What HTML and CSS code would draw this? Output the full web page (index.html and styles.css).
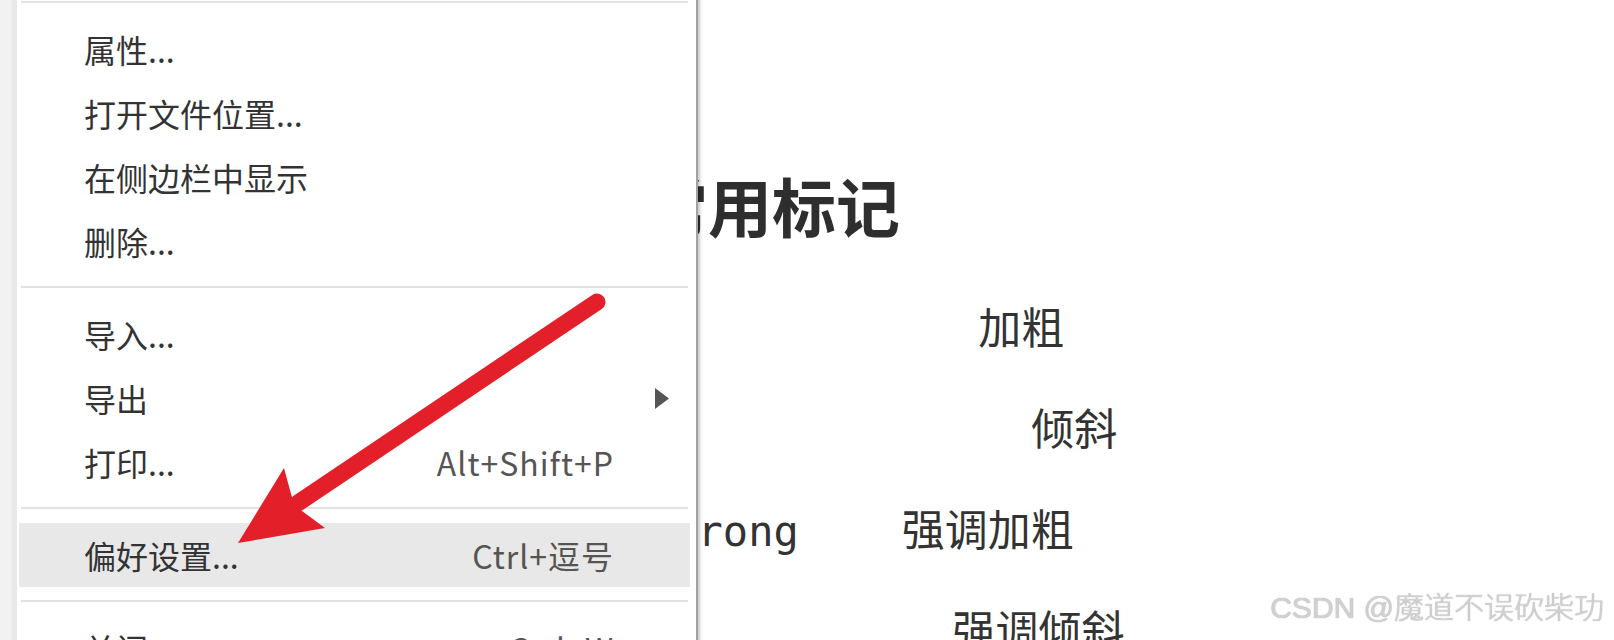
FILE: index.html
```html
<!DOCTYPE html>
<html lang="zh-CN">
<head>
    <meta charset="UTF-8">
    <meta name="viewport" content="width=device-width, initial-scale=1.0">
    <title>常用标记</title>
    <link rel="stylesheet" href="styles.css">
</head>
<body>

    <div class="page">
        <div class="sidebar-edge"></div>

        <main class="doc">
            <h2 class="doc-title">常用标记</h2>

            <div class="tag-row"><code>b</code><span class="tag-desc gap-b">加粗</span></div>
            <div class="tag-row"><code>i</code><span class="tag-desc gap-i">倾斜</span></div>
            <div class="tag-row"><code>strong</code><span class="tag-desc gap-strong">强调加粗</span></div>
            <div class="tag-row"><code>em</code><span class="tag-desc gap-em">强调倾斜</span></div>
        </main>
    </div>

    <!-- right click menu on the file list -->
    <div class="context-menu">
        <div class="menu-sep"></div>
        <div class="menu-item"><span class="label">属性...</span></div>
        <div class="menu-item"><span class="label">打开文件位置...</span></div>
        <div class="menu-item"><span class="label">在侧边栏中显示</span></div>
        <div class="menu-item"><span class="label">删除...</span></div>
        <div class="menu-sep"></div>
        <div class="menu-item"><span class="label">导入...</span></div>
        <div class="menu-item">
            <span class="label">导出</span>
            <span class="submenu">
                <svg width="14" height="21" viewBox="0 0 14 21"><polygon points="0,0 14,10.5 0,21" fill="#555"/></svg>
            </span>
        </div>
        <div class="menu-item"><span class="label">打印...</span><span class="shortcut">Alt+Shift+P</span></div>
        <div class="menu-sep"></div>
        <div class="menu-item active"><span class="label">偏好设置...</span><span class="shortcut">Ctrl+逗号</span></div>
        <div class="menu-sep"></div>
        <div class="menu-item"><span class="label">关闭</span><span class="shortcut">Ctrl+W</span></div>
    </div>

    <!-- red pointer drawn over the screenshot -->
    <svg class="annotation" width="1614" height="640" viewBox="0 0 1614 640">
        <line x1="597" y1="302" x2="298" y2="503" stroke="#e3202a" stroke-width="17" stroke-linecap="round"/>
        <polygon points="238,543 284,468 294,505 325,528" fill="#e3202a"/>
    </svg>

    <div class="watermark">CSDN @魔道不误砍柴功</div>

</body>
</html>
```

FILE: styles.css
```css
html, body {
    margin: 0;
    padding: 0;
    height: 640px;
    overflow: hidden;
    background-color: #fff;
}

body {
    position: relative;
    font-family: "Noto Sans CJK SC", "Noto Sans", sans-serif;
    color: #333;
}

.page {
    display: flex;
    height: 640px;
}

.sidebar-edge {
    width: 12px;
    background-color: #f2f2f2;
    flex-shrink: 0;
}

.doc {
    flex: 1;
    padding: 159px 0 0 632px;
}

.doc-title {
    margin: 0 0 26px 0;
    font-size: 64px;
    line-height: 90px;
    font-weight: bold;
    color: #2e2e2e;
    white-space: nowrap;
}

.tag-row {
    display: flex;
    align-items: baseline;
    height: 101px;
    line-height: 101px;
    padding-left: 3px;
    white-space: nowrap;
}

.tag-row code {
    font-family: "DejaVu Sans Mono", monospace;
    font-size: 42px;
    color: #333;
}

.tag-desc {
    font-size: 43px;
    color: #333;
}

.gap-b { margin-left: 306px; }
.gap-i { margin-left: 359px; }
.gap-strong { margin-left: 103px; }
.gap-em { margin-left: 255px; }

.context-menu {
    position: absolute;
    left: 12px;
    top: -12px;
    width: 671px;
    padding: 0 6px 0 2px;
    background-color: #fff;
    border-left: 5px solid #e8e8e8;
    border-right: 2px solid #a2a2a2;
    box-shadow: 2px 0 3px rgba(0, 0, 0, 0.22);
}

.menu-sep {
    height: 2px;
    background-color: #e2e2e2;
    margin: 13px 2px 14px 2px;
}

.menu-item {
    display: flex;
    align-items: center;
    height: 64px;
    padding-left: 65px;
    font-size: 32px;
    color: #333;
    white-space: nowrap;
}

.menu-item.active {
    background-color: #e8e8e8;
}

.menu-item .label {
    flex: 1;
}

.menu-item .shortcut {
    color: #555;
    letter-spacing: 1px;
    margin-right: 76px;
}

.menu-item .submenu {
    display: flex;
    width: 76px;
    margin-left: auto;
    padding-left: 41px;
    box-sizing: border-box;
}

.annotation {
    position: absolute;
    left: 0;
    top: 0;
    pointer-events: none;
}

.watermark {
    position: absolute;
    right: 10px;
    bottom: 17px;
    font-family: "Liberation Sans", "Noto Sans CJK SC", sans-serif;
    font-size: 30px;
    line-height: 30px;
    font-weight: 300;
    color: #d2d2d2;
    text-shadow: 0 0 1px #9a9a9a;
    white-space: nowrap;
}
```
